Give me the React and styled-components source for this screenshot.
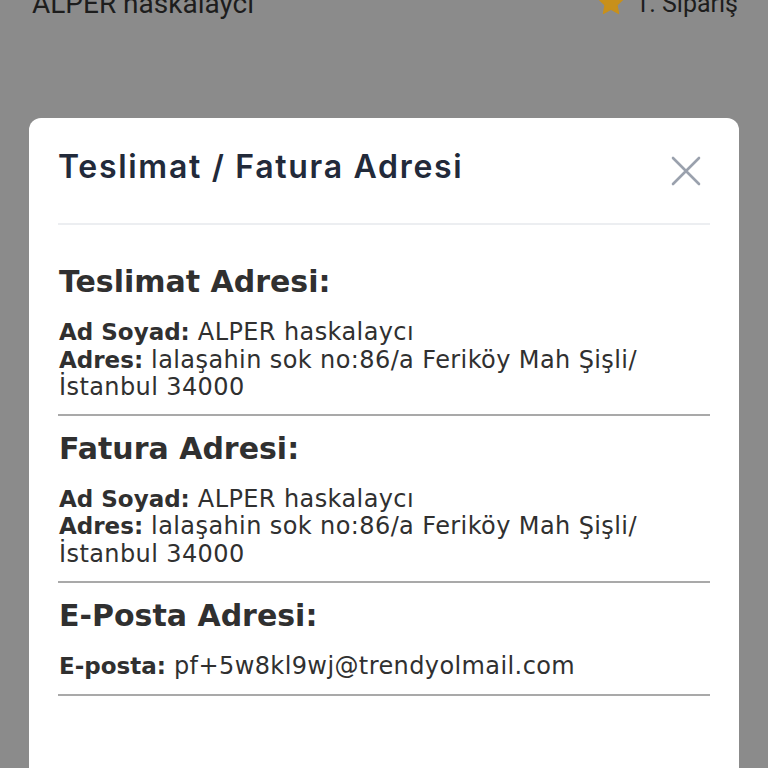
import styled, { createGlobalStyle } from 'styled-components';

const GlobalStyle = createGlobalStyle`
  html, body {
    margin: 0;
    padding: 0;
    background: #8b8b8b;
    overflow: hidden;
  }
  * { box-sizing: border-box; }
`;

const Page = styled.div`
  height: 768px;
  font-family: Roboto, "Noto Sans", sans-serif;
`;

const CustomerBar = styled.div`
  display: flex;
  justify-content: space-between;
  align-items: center;
  height: 32px;
  margin-top: -13px;
  padding: 0 30px 0 32px;
  font-size: 28px;
  color: #1d1d1d;
`;

const OrderBadge = styled.div`
  display: flex;
  align-items: center;
  gap: 9px;
  font-size: 25px;
`;

const Overlay = styled.div`
  position: fixed;
  inset: 0;
  display: flex;
  justify-content: center;
  padding-top: 118px;
`;

const Modal = styled.div`
  width: 710px;
  min-height: 700px;
  background: #fff;
  border-radius: 12px;
  padding: 0 29px;
`;

const ModalHeader = styled.div`
  display: flex;
  justify-content: space-between;
  align-items: center;
  height: 107px;
  padding-bottom: 8px;
  border-bottom: 2px solid #eceef1;
`;

const ModalTitle = styled.h2`
  margin: 0;
  font-family: Inter, "Noto Sans", sans-serif;
  font-weight: 600;
  font-size: 32px;
  color: #222a3a;
  letter-spacing: 1.7px;
`;

const CloseButton = styled.button`
  border: 0;
  background: none;
  padding: 0;
  margin: 9px 8px 0 0;
  width: 32px;
  height: 32px;
  display: flex;
  align-items: center;
  justify-content: center;
  cursor: pointer;
`;

const Section = styled.section`
  padding: ${p => (p.first ? '38px 0 12px 1px' : '14px 0 13px 1px')};
  border-bottom: 2px solid #a9a9a9;
  font-family: "DejaVu Sans", "Noto Sans", sans-serif;
  color: #303030;
`;

const SectionTitle = styled.h3`
  margin: 0 0 18px;
  font-size: 30px;
  line-height: 38px;
  font-weight: 700;
`;

const Line = styled.div`
  font-size: 24px;
  line-height: 27.5px;
  letter-spacing: 0.4px;

  b {
    font-size: 23px;
    font-weight: 700;
    letter-spacing: 0;
  }
`;

const Star = () => (
  <svg width="30" height="30" viewBox="0 0 24 24">
    <path
      d="M12 1.8l3 6.2 6.8.9-5 4.7 1.3 6.8L12 17l-6.1 3.4 1.3-6.8-5-4.7 6.8-.9z"
      fill="#c8901b"
      stroke="#c8901b"
      strokeWidth="1"
      strokeLinejoin="round"
    />
  </svg>
);

const Close = () => (
  <svg width="30" height="30" viewBox="0 0 30 30">
    <path d="M2 2L28 28M28 2L2 28" stroke="#9aa1ad" strokeWidth="2.6" strokeLinecap="round" />
  </svg>
);

const customer = 'ALPER haskalaycı';

function AddressBlock({ title, first }) {
  return (
    <Section first={first}>
      <SectionTitle>{title}</SectionTitle>
      <Line><b>Ad Soyad:</b> {customer}</Line>
      <Line><b>Adres:</b> lalaşahin sok no:86/a Feriköy Mah Şişli/<br />İstanbul 34000</Line>
    </Section>
  );
}

export default function App() {
  return (
    <>
      <GlobalStyle />
      <Page>
        <CustomerBar>
          <span>{customer}</span>
          <OrderBadge>
            <Star />
            <span>1. Sipariş</span>
          </OrderBadge>
        </CustomerBar>
        <Overlay>
          <Modal>
            <ModalHeader>
              <ModalTitle>Teslimat / Fatura Adresi</ModalTitle>
              <CloseButton aria-label="Kapat"><Close /></CloseButton>
            </ModalHeader>
            <AddressBlock title="Teslimat Adresi:" first />
            <AddressBlock title="Fatura Adresi:" />
            <Section>
              <SectionTitle>E-Posta Adresi:</SectionTitle>
              <Line><b>E-posta:</b> pf+5w8kl9wj@trendyolmail.com</Line>
            </Section>
          </Modal>
        </Overlay>
      </Page>
    </>
  );
}
